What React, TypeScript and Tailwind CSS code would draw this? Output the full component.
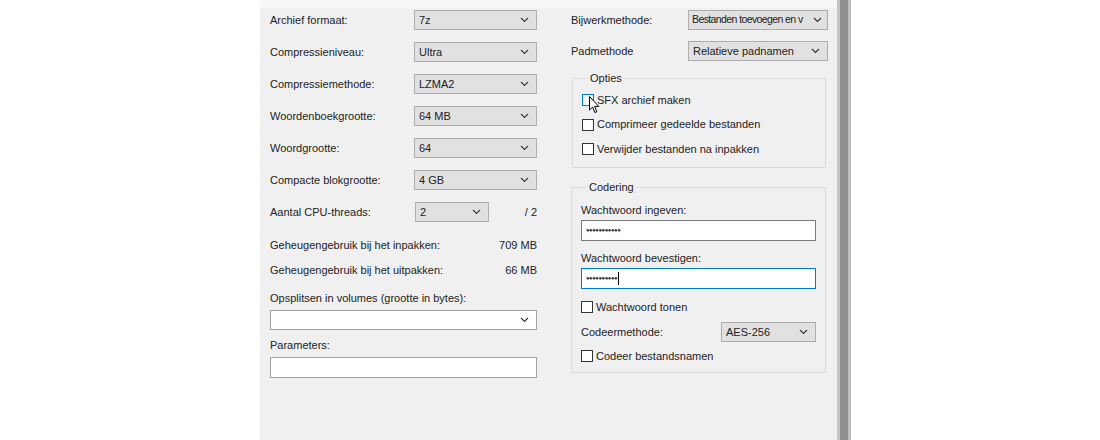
import React from "react";

function Chevron() {
	return (
		<svg width="9" height="6" viewBox="0 0 9 6" className="shrink-0">
			<polyline points="1,1 4.5,4.5 8,1" fill="none" stroke="#333" strokeWidth="1.1" />
		</svg>
	);
}

function Combo({ value, width, white }: { value: string; width: string; white?: boolean }) {
	return (
		<div
			className={`${width} h-[20px] flex items-center justify-between pl-[4px] pr-[7px] border ${
				white ? "bg-white border-[#a0a0a0]" : "bg-[#e1e1e1] border-[#adadad]"
			}`}
		>
			<span className="overflow-hidden whitespace-nowrap text-clip mr-[3px]">{value}</span>
			<Chevron />
		</div>
	);
}

function Check({ label, hover }: { label: string; hover?: boolean }) {
	return (
		<div className="h-[16px] flex items-center">
			<span
				className={`w-[12px] h-[12px] border bg-white shrink-0 ${
					hover ? "border-[#0078d7] bg-[#e5f1fb]" : "border-[#333]"
				}`}
			></span>
			<span className="ml-[3px]">{label}</span>
		</div>
	);
}

function Row({ label, children }: { label: string; children: React.ReactNode }) {
	return (
		<div className="h-[20px] flex items-center justify-between">
			<span>{label}</span>
			{children}
		</div>
	);
}

export default function App() {
	return (
		<main
			className="w-[1100px] h-[440px] bg-white flex text-[11px] text-[#222] overflow-hidden"
			style={{ fontFamily: '"Liberation Sans", Arial, sans-serif' }}
		>
			<div className="w-[260px] shrink-0"></div>

			{/* dialog body */}
			<div className="w-[577px] shrink-0 bg-[#f0f0f0] flex flex-col">
				<div className="h-[8px] bg-[#f8f8f8]"></div>
				<div className="flex pt-[2px] pl-[10px]">
					{/* left column */}
					<div className="w-[267px] flex flex-col">
						<div className="flex flex-col gap-[12px]">
							<Row label="Archief formaat:"><Combo value="7z" width="w-[123px]" /></Row>
							<Row label="Compressieniveau:"><Combo value="Ultra" width="w-[123px]" /></Row>
							<Row label="Compressiemethode:"><Combo value="LZMA2" width="w-[123px]" /></Row>
							<Row label="Woordenboekgrootte:"><Combo value="64 MB" width="w-[123px]" /></Row>
							<Row label="Woordgrootte:"><Combo value="64" width="w-[123px]" /></Row>
							<Row label="Compacte blokgrootte:"><Combo value="4 GB" width="w-[123px]" /></Row>
							<div className="h-[20px] flex items-center">
								<span className="w-[145px]">Aantal CPU-threads:</span>
								<Combo value="2" width="w-[74px]" />
								<span className="ml-auto">/ 2</span>
							</div>
						</div>
						<div className="mt-[15px] h-[16px] flex items-center justify-between">
							<span>Geheugengebruik bij het inpakken:</span>
							<span>709 MB</span>
						</div>
						<div className="mt-[9px] h-[16px] flex items-center justify-between">
							<span>Geheugengebruik bij het uitpakken:</span>
							<span>66 MB</span>
						</div>
						<div className="mt-[12px] h-[16px] flex items-center">Opsplitsen in volumes (grootte in bytes):</div>
						<div className="mt-[4px]"><Combo value="" width="w-full" white /></div>
						<div className="mt-[7px] h-[16px] flex items-center">Parameters:</div>
						<div className="mt-[4px] h-[21px] bg-white border border-[#a0a0a0]"></div>
					</div>

					{/* right column */}
					<div className="w-[257px] ml-[34px] flex flex-col">
						<div className="h-[20px] flex items-center justify-between">
							<span>Bijwerkmethode:</span>
							<div className="w-[140px] h-[20px] flex items-center justify-between pl-[3px] pr-[5px] border bg-[#e1e1e1] border-[#adadad]">
								<span className="whitespace-nowrap text-[10.5px] tracking-[-0.6px]">Bestanden toevoegen en v</span>
								<Chevron />
							</div>
						</div>
						<div className="mt-[11px] h-[20px] flex items-center justify-between">
							<span>Padmethode</span>
							<Combo value="Relatieve padnamen" width="w-[140px]" />
						</div>

						<fieldset className="mt-[9px] ml-[1px] w-[254px] border border-[#dcdcdc] pl-[9px] pb-[10px] relative">
							<legend className="ml-[6px] px-[2px] h-[16px] leading-[16px]">Opties</legend>
							<div className="pt-[6px] flex flex-col gap-[8.5px]">
								<Check label="SFX archief maken" hover />
								<Check label="Comprimeer gedeelde bestanden" />
								<Check label="Verwijder bestanden na inpakken" />
							</div>
							{/* mouse pointer */}
							<svg width="11" height="18" viewBox="0 0 11 18" className="absolute left-[16px] top-[10px]">
								<path d="M0.5,0.5 L0.5,14 L3.6,11 L5.8,16.5 L7.8,15.7 L5.6,10.4 L9.8,10.4 Z" fill="white" stroke="black" strokeWidth="1" strokeLinejoin="round" />
							</svg>
						</fieldset>

						<fieldset className="mt-[11px] w-[255px] border border-[#dcdcdc] px-[9px] pb-[8px]">
							<legend className="ml-[6px] px-[2px] h-[16px] leading-[16px]">Codering</legend>
							<div className="pt-[7px] h-[23px] flex items-center">Wachtwoord ingeven:</div>
							<div className="mt-[2px] h-[21px] bg-white border border-[#7a7a7a] flex items-center pl-[4px]">
								<span className="text-[6px] tracking-[-0.5px] text-[#333]">●●●●●●●●●●●</span>
							</div>
							<div className="mt-[9px] h-[16px] flex items-center">Wachtwoord bevestigen:</div>
							<div className="mt-[2px] h-[21px] bg-white border border-[#0078d7] flex items-center pl-[4px]">
								<span className="text-[6px] tracking-[-0.5px] text-[#333]">●●●●●●●●●●</span>
								<span className="w-[1px] h-[13px] bg-black ml-[1px]"></span>
							</div>
							<div className="mt-[10px]"><Check label="Wachtwoord tonen" /></div>
							<div className="mt-[7px] h-[20px] flex items-center justify-between">
								<span>Codeermethode:</span>
								<Combo value="AES-256" width="w-[95px]" />
							</div>
							<div className="mt-[6px]"><Check label="Codeer bestandsnamen" /></div>
						</fieldset>
					</div>
				</div>
			</div>

			{/* window edge */}
			<div className="w-[14px] shrink-0 flex">
				<div className="w-[3px] bg-[#c4c4c4]"></div>
				<div className="w-[8px] bg-[#8e8e8e]"></div>
				<div className="w-[3px] bg-[#bdbdbd]"></div>
			</div>
			<div className="flex-1 bg-white"></div>
		</main>
	);
}
